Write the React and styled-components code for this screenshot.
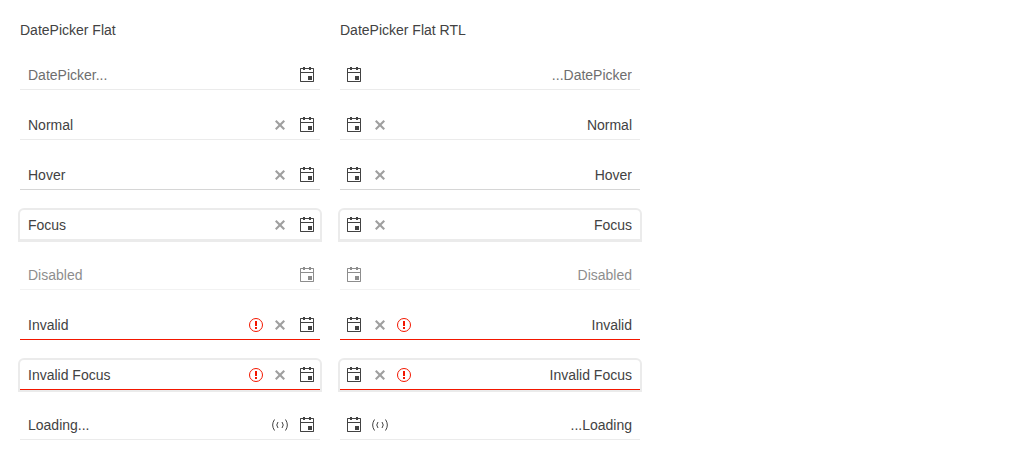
import React from "react";
import styled, { createGlobalStyle } from "styled-components";

const GlobalStyle = createGlobalStyle`
  *, *::before, *::after { box-sizing: border-box; }
  body {
    margin: 0;
    background: #ffffff;
    color: #424242;
    font: 14px/20px "Liberation Sans", Arial, Helvetica, sans-serif;
  }
`;

const lineColors = {
  normal: "#ebebeb",
  hover: "#d6d6d6",
  focus: "#ebebeb",
  invalid: "#f31700",
};

const Page = styled.main`
  display: grid;
  grid-template-columns: repeat(2, minmax(0, 300px));
  gap: 20px;
  padding: 20px;
`;

const Column = styled.section`
  display: flex;
  flex-direction: column;
  gap: 20px;
`;

const Title = styled.h2`
  margin: 0;
  font-size: 14px;
  font-weight: 400;
  line-height: 20px;
`;

const Picker = styled.div`
  display: flex;
  align-items: stretch;
  height: 30px;
  border-bottom: 1px solid ${(p) => lineColors[p.$line]};
  border-radius: 4px 4px 0 0;
  box-shadow: ${(p) => (p.$ring ? "0 0 0 2px #ebebeb" : "none")};
  opacity: ${(p) => (p.$disabled ? 0.6 : 1)};
`;

const Field = styled.input`
  flex: 1;
  min-width: 0;
  padding: 0 8px;
  border: 0;
  outline: 0;
  background: transparent;
  color: #424242;
  font: inherit;

  &::placeholder {
    color: #6e6e6e;
    opacity: 1;
  }
`;

const Slot = styled.span`
  display: flex;
  align-items: center;
  justify-content: center;
  width: 24px;
  padding: 1px 0 0;
  color: ${(p) => (p.$error ? "#f31700" : "#424242")};
`;

const ClearButton = styled.button`
  display: flex;
  align-items: center;
  justify-content: center;
  width: 24px;
  padding: 1px 0 0;
  border: 0;
  background: none;
  color: #424242;
  opacity: 0.5;
`;

const CalendarButton = styled.button`
  display: flex;
  align-items: center;
  justify-content: center;
  width: 28px;
  padding: ${(p) => (p.$rtl ? "1px 0 0" : "1px 0 0 2px")};
  border: 0;
  background: none;
  color: #424242;
`;

const Icon = styled.svg`
  display: block;
  width: 16px;
  height: 16px;
  fill: currentColor;
`;

const CalendarIcon = () => (
  <Icon viewBox="0 0 16 16" aria-hidden="true">
    <path
      fillRule="evenodd"
      d="M4 0h2v1h4V0h2v1h2.500l.5.500v13l-.5.500h-13l-.5-.500v-13l.5-.500H4zM2 2v3h12V2h-2v1h-2V2H6v1H4V2zM2 6v8h12V6z"
    />
    <path d="M9 9h4v4H9z" />
  </Icon>
);

const ClearIcon = () => (
  <Icon viewBox="0 0 16 16" aria-hidden="true">
    <path d="M13 4.5 9.5 8l3.5 3.5-1.500 1.500L8 9.500 4.500 13 3 11.500 6.500 8 3 4.500 4.500 3 8 6.500 11.500 3z" />
  </Icon>
);

const ErrorIcon = () => (
  <Icon viewBox="0 0 16 16" aria-hidden="true">
    <circle cx="8" cy="8" r="6.500" fill="none" stroke="currentColor" />
    <path d="M7 4h2v5H7zM7 10h2v2H7z" />
  </Icon>
);

const LoadingIcon = () => (
  <Icon viewBox="0 0 16 16" aria-hidden="true">
    <path
      fill="none"
      stroke="currentColor"
      d="M2.500 2.500Q-1.200 8 2.500 13.500M13.500 2.500Q17.200 8 13.500 13.500M6 5Q3.500 8 6 11M10 5Q12.500 8 10 11"
    />
  </Icon>
);

const rows = [
  { name: "Placeholder", placeholder: "DatePicker...", line: "normal" },
  { name: "Normal", value: "Normal", line: "normal", clear: true },
  { name: "Hover", value: "Hover", line: "hover", clear: true },
  { name: "Focus", value: "Focus", line: "focus", clear: true, ring: true },
  { name: "Disabled", value: "Disabled", line: "normal", disabled: true },
  { name: "Invalid", value: "Invalid", line: "invalid", clear: true, invalid: true },
  { name: "Invalid focus", value: "Invalid Focus", line: "invalid", clear: true, invalid: true, ring: true },
  { name: "Loading", value: "Loading...", line: "normal", loading: true },
];

const DatePicker = ({ row, rtl }) => (
  <Picker $line={row.line} $ring={row.ring} $disabled={row.disabled}>
    <Field
      type="text"
      aria-label={row.name}
      aria-invalid={row.invalid}
      placeholder={row.placeholder}
      defaultValue={row.value}
      disabled={row.disabled}
    />
    {row.invalid && (
      <Slot $error>
        <ErrorIcon />
      </Slot>
    )}
    {row.clear && (
      <ClearButton type="button" aria-label="Clear">
        <ClearIcon />
      </ClearButton>
    )}
    {row.loading && (
      <Slot>
        <LoadingIcon />
      </Slot>
    )}
    <CalendarButton type="button" aria-label="Open calendar" disabled={row.disabled} $rtl={rtl}>
      <CalendarIcon />
    </CalendarButton>
  </Picker>
);

const PickerColumn = ({ title, rtl }) => (
  <Column>
    <Title>{title}</Title>
    {rows.map((row) => (
      <div key={row.name} dir={rtl ? "rtl" : "ltr"}>
        <DatePicker row={row} rtl={rtl} />
      </div>
    ))}
  </Column>
);

export default function App() {
  return (
    <>
      <GlobalStyle />
      <Page>
        <PickerColumn title="DatePicker Flat" />
        <PickerColumn title="DatePicker Flat RTL" rtl />
      </Page>
    </>
  );
}
